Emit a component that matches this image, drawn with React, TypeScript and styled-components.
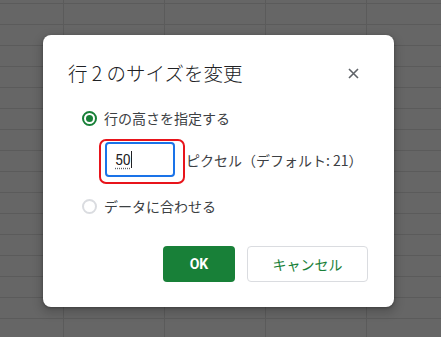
import * as React from 'react';
import styled, { createGlobalStyle } from 'styled-components';

const Global = createGlobalStyle`
  html, body { margin: 0; padding: 0; }
  body {
    font-family: Roboto, "Noto Sans CJK JP", "Noto Sans", sans-serif;
    color: #202124;
  }
`

// Spreadsheet behind the dim overlay
const Sheet = styled.div`
  width: 441px;
  height: 337px;
  box-sizing: border-box;
  padding: 35px 0 0 43px;
  background-color: #666666;
  background-image:
    linear-gradient(to right, #5b5b5b 1px, transparent 1px),
    linear-gradient(to bottom, #5b5b5b 1px, transparent 1px);
  background-size: 101px 21px;
  background-position: 63px 3px;
  overflow: hidden;
`

const Dialog = styled.div`
  width: 351px;
  box-sizing: border-box;
  padding: 24px 26px 25px 25px;
  background: #fff;
  border-radius: 8px;
  box-shadow: 0 1px 3px rgba(0, 0, 0, .3), 0 4px 8px 3px rgba(0, 0, 0, .15);
`

const Header = styled.div`
  display: flex;
  justify-content: space-between;
  align-items: center;
  height: 28px;
`

const Title = styled.h1`
  margin: 0;
  font-family: "Noto Sans CJK JP", "Noto Sans", sans-serif;
  font-size: 19.5px;
  font-weight: 300;
  line-height: 28px;
  color: #202124;
`

const Close = styled.button`
  display: flex;
  align-items: center;
  justify-content: center;
  width: 20px;
  height: 20px;
  margin-right: 5px;
  padding: 0;
  border: 0;
  background: none;
  color: #5f6368;
`

const Body = styled.div`
  display: flex;
  flex-direction: column;
  margin-top: 21px;
  padding-left: 14px;
`

const Option = styled.label`
  display: flex;
  align-items: center;
  gap: 7px;
  height: 20px;
  font-family: "Noto Sans CJK JP", sans-serif;
  font-size: 14px;
  color: #3c4043;
`

const Radio = styled.span<{ checked?: boolean }>`
  position: relative;
  width: 15px;
  height: 15px;
  box-sizing: border-box;
  border-radius: 50%;
  border: 2px solid ${p => p.checked ? '#188038' : '#dadce0'};

  &::after {
    content: '';
    display: ${p => p.checked ? 'block' : 'none'};
    position: absolute;
    inset: 2px;
    border-radius: 50%;
    background: #188038;
  }
`

const SizeRow = styled.div`
  display: flex;
  align-items: center;
  margin: 14px 0 19px 23px;
`

const Field = styled.div`
  position: relative;
  display: flex;
  align-items: center;
  width: 70px;
  height: 35px;
  box-sizing: border-box;
  padding-left: 8px;
  border: 2px solid #1a73e8;
  border-radius: 4px;
  font-family: Roboto, sans-serif;
  font-size: 14px;
  color: #202124;
`

const Value = styled.span`
  text-decoration: underline dotted #5f6368;
  text-underline-offset: 3px;
`

const Caret = styled.span`
  width: 1px;
  height: 17px;
  background: #202124;
`

// red annotation frame drawn over the field
const Highlight = styled.span`
  position: absolute;
  left: -8px;
  top: -5px;
  right: -12px;
  bottom: -9px;
  border: 2px solid #e8141b;
  border-radius: 7px;
  pointer-events: none;
`

const Unit = styled.span`
  margin-left: 11px;
  font-family: "Noto Sans CJK JP", sans-serif;
  font-size: 14px;
  color: #3c4043;
`

const Footer = styled.div`
  display: flex;
  justify-content: flex-end;
  gap: 12px;
  margin-top: 30px;
`

const Button = styled.button<{ primary?: boolean }>`
  height: 36px;
  box-sizing: border-box;
  border-radius: 4px;
  font-size: 14px;
  cursor: pointer;
  ${p => p.primary ? `
    width: 72px;
    border: 0;
    background: #188038;
    color: #fff;
    font-family: Roboto, sans-serif;
    font-weight: 700;
  ` : `
    width: 121px;
    border: 1px solid #dadce0;
    background: #fff;
    color: #188038;
    font-family: "Noto Sans CJK JP", sans-serif;
    font-weight: 400;
  `}
`

export default () => (
  <>
    <Global />
    <Sheet>
      <Dialog>
        <Header>
          <Title>行 2 のサイズを変更</Title>
          <Close aria-label="閉じる">
            <svg width="11" height="11" viewBox="0 0 11 11">
              <path d="M1 1L10 10M10 1L1 10" stroke="currentColor" strokeWidth="1.6" />
            </svg>
          </Close>
        </Header>
        <Body>
          <Option><Radio checked />行の高さを指定する</Option>
          <SizeRow>
            <Field>
              <Value>50</Value><Caret />
              <Highlight />
            </Field>
            <Unit>ピクセル（デフォルト: 21）</Unit>
          </SizeRow>
          <Option><Radio />データに合わせる</Option>
        </Body>
        <Footer>
          <Button primary>OK</Button>
          <Button>キャンセル</Button>
        </Footer>
      </Dialog>
    </Sheet>
  </>
)
